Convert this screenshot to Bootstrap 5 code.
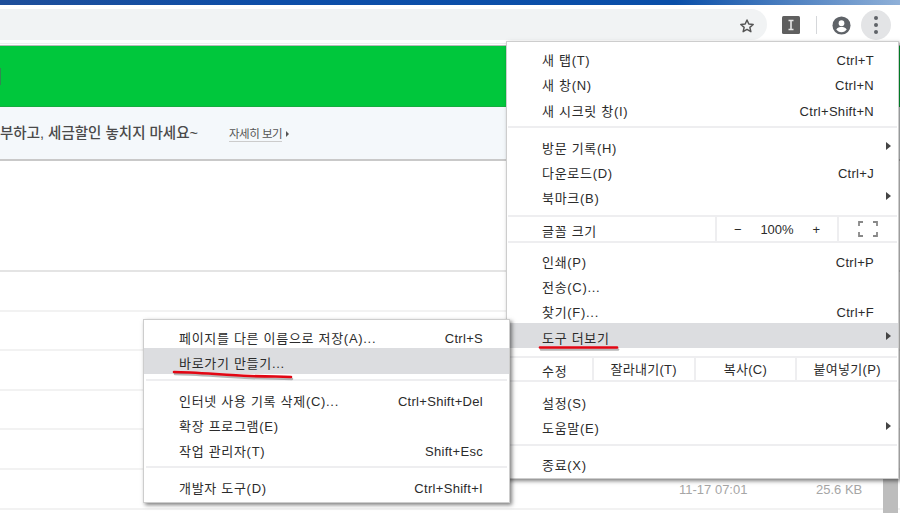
<!DOCTYPE html>
<html lang="ko"><head><meta charset="utf-8">
<link href="https://cdn.jsdelivr.net/npm/bootstrap@5.3.0/dist/css/bootstrap.min.css" rel="stylesheet">
<style>
html,body{margin:0;height:513px;overflow:hidden;background:#fff}
body{font-family:"Liberation Sans","Noto Sans CJK KR",sans-serif;font-size:13px;color:#333;position:relative;width:900px}
.titlebar{height:5px;background:linear-gradient(90deg,#1f4f9a 0,#0e4ea8 30%,#0a4fa8 75%,#8fb0d8 100%)}
.toolbar{height:39px;background:#fff;border-bottom:1px solid #efefef;padding-top:4px}
.omni{width:767px;height:31px;background:#f1f3f4;border-radius:0 16px 16px 0;padding-right:12px;flex:none}
.star-ic{flex:none;margin-top:2px}
.ic-ext{flex:none;margin:7px 0 0 15px}
.tool-sep{width:1px;height:18px;background:#d5d7da;margin:7px 15px 0 16px;flex:none}
.ic-user{flex:none;margin-top:7px}
.dots{width:30px;height:30px;border-radius:50%;background:#e3e4e6;margin:1px 9px 0 10px;flex:none}
.dot{width:4px;height:4px;background:#5f6368;margin:-.5px 0}
.banner-green{height:62px;margin-top:1px;background:#00c73c;border-top:1px solid #b9b9b9;border-bottom:1px solid #15ad3f}
.green-mark{width:1px;height:17px;background:#2f8a50}
.banner-tip{height:54px;background:#f4f8fb;border-bottom:2px solid #c9c9c9;padding-top:2px;font-size:14.5px;font-weight:500;color:#4a4a4a;white-space:nowrap}
.tip-more{font-size:11.5px;font-weight:400;color:#555;border-bottom:1px solid #ccc;margin-left:31px;line-height:14px;letter-spacing:-.5px}
.tip-arrow{width:0;height:0;border-left:3px solid #555;border-top:3px solid transparent;border-bottom:3px solid transparent;margin-left:4px}
.rows{padding-top:71px}
.data-row{height:39.6px;border-bottom:2px solid #f2f2f2}
.data-row.first{height:40px;border-bottom-color:#e4e4e4}
.cell-date,.cell-size{position:absolute;top:480px;color:#a6a6a6;font-size:13px}
.cell-date{left:679px}.cell-size{left:816px}
.scroll-thumb{position:absolute;left:883px;top:476px;width:15px;height:37px;background:#bdbdbd}
.cmenu{position:absolute;background:#fff;border:1px solid #cdcdcd;box-shadow:2px 2px 4px rgba(0,0,0,.5);color:#2b2b2b;font-size:13px;padding-top:3px}
.menu-main{left:506px;top:41px;width:393px;height:438px}
.menu-sub{left:143px;top:319px;width:367px;height:184px}
.mi{height:25.3px;padding:6px 26px 0 35px;display:flex;align-items:center;justify-content:space-between;white-space:nowrap;position:relative}
.menu-main .mi{padding-right:24px}
.mi>span:first-child,.mi-row{letter-spacing:.7px}
.mi>span+span{letter-spacing:.3px}
.mi.on{background:#dcdde0}
.msep{height:2px;background:#eeeef0;margin:5px 0}
.menu-main .msep{margin:5px 1px}
.menu-sub .msep{margin:5px 2px}
.caret-r{position:absolute;right:7px;top:9px;width:0;height:0;border-left:5px solid #444;border-top:4px solid transparent;border-bottom:4px solid transparent}
.mi-row{display:flex;align-items:stretch;white-space:nowrap;border-top:2px solid #eeeef0;border-bottom:2px solid #eeeef0;margin:0 1px}
.row-zoom{height:28px;margin-top:6px;margin-bottom:4px}
.row-edit{height:26px;margin-top:8px;margin-bottom:6px}
.mi-row .lab{padding:6px 0 0 34px;display:flex;align-items:center}
.zoom-lab{width:207px}
.zoom-box{width:122px;border-left:2px solid #eeeef0;display:flex;align-items:center;justify-content:space-between;padding:2px 17px 0;letter-spacing:0}
.zoom-full{flex:1;border-left:2px solid #eeeef0;display:flex;align-items:center;padding-left:19px}
.edit-lab{width:84px}
.edit-btn{width:102px;border-left:2px solid #eeeef0;display:flex;align-items:center;justify-content:center;padding-top:2px;letter-spacing:.3px}
.squiggle{position:absolute;left:0;top:0;pointer-events:none;overflow:visible}
</style></head><body>
<div class="titlebar"></div>
<div class="toolbar d-flex align-items-start">
  <div class="omni d-flex align-items-center justify-content-end">
    <svg class="star-ic" width="16" height="16" viewBox="0 0 24 24"><path d="M12 3l2.700 6.100 6.600.6-5 4.400 1.500 6.500L12 17.200l-5.800 3.400 1.500-6.500-5-4.400 6.600-.6z" fill="none" stroke="#555" stroke-width="2.200" stroke-linejoin="round"/></svg>
  </div>
  <svg class="ic-ext" width="18" height="18" viewBox="0 0 18 18"><rect width="18" height="18" rx="1.500" fill="#5f5f5f"/><path d="M6.500 4.500h5M6.500 13.500h5M9 4.500v9" stroke="#e6e6e6" stroke-width="1.600"/></svg>
  <div class="tool-sep"></div>
  <svg class="ic-user" width="19" height="19" viewBox="0 0 20 20"><circle cx="10" cy="10" r="9.500" fill="#5f6368"/><circle cx="10" cy="7.500" r="3" fill="#fff"/><path d="M4.500 14.200c1.200-2 3.500-2.900 5.500-2.900s4.300.9 5.500 2.900c-1.200 1.700-3.200 2.800-5.500 2.800s-4.300-1.100-5.500-2.800z" fill="#fff"/></svg>
  <div class="dots d-flex flex-column align-items-center justify-content-center gap-1">
    <span class="dot rounded-circle"></span><span class="dot rounded-circle"></span><span class="dot rounded-circle"></span>
  </div>
</div>
<div class="banner-green d-flex align-items-center"><span class="green-mark"></span></div>
<div class="banner-tip d-flex align-items-center"><span>부하고, 세금할인 놓치지 마세요~</span><span class="tip-more">자세히 보기</span><span class="tip-arrow"></span></div>
<div class="rows">
  <div class="data-row first"></div><div class="data-row"></div><div class="data-row"></div><div class="data-row"></div><div class="data-row"></div><div class="data-row"></div><div class="data-row"></div>
</div>
<div class="cell-date">11-17 07:01</div><div class="cell-size">25.6 KB</div>
<div class="scroll-thumb"></div>

<div class="cmenu menu-main">
  <div class="mi"><span>새 탭(T)</span><span>Ctrl+T</span></div>
  <div class="mi"><span>새 창(N)</span><span>Ctrl+N</span></div>
  <div class="mi"><span>새 시크릿 창(I)</span><span>Ctrl+Shift+N</span></div>
  <div class="msep"></div>
  <div class="mi"><span>방문 기록(H)</span><i class="caret-r"></i></div>
  <div class="mi"><span>다운로드(D)</span><span>Ctrl+J</span></div>
  <div class="mi"><span>북마크(B)</span><i class="caret-r"></i></div>
  <div class="mi-row row-zoom">
    <div class="lab zoom-lab">글꼴 크기</div>
    <div class="zoom-box"><span>−</span><span>100%</span><span>+</span></div>
    <div class="zoom-full"><svg width="20" height="16" viewBox="0 0 20 16"><path d="M1 5V1h4M15 1h4v4M1 11v4h4M15 15h4v-4" fill="none" stroke="#888" stroke-width="1.800"/></svg></div>
  </div>
  <div class="mi"><span>인쇄(P)</span><span>Ctrl+P</span></div>
  <div class="mi"><span>전송(C)...</span></div>
  <div class="mi"><span>찾기(F)...</span><span>Ctrl+F</span></div>
  <div class="mi on"><span>도구 더보기</span><i class="caret-r"></i></div>
  <div class="mi-row row-edit">
    <div class="lab edit-lab">수정</div>
    <div class="edit-btn">잘라내기(T)</div><div class="edit-btn">복사(C)</div><div class="edit-btn">붙여넣기(P)</div>
  </div>
  <div class="mi"><span>설정(S)</span></div>
  <div class="mi"><span>도움말(E)</span><i class="caret-r"></i></div>
  <div class="msep"></div>
  <div class="mi"><span>종료(X)</span></div>
</div>

<div class="cmenu menu-sub">
  <div class="mi"><span>페이지를 다른 이름으로 저장(A)...</span><span>Ctrl+S</span></div>
  <div class="mi on"><span>바로가기 만들기...</span></div>
  <div class="msep"></div>
  <div class="mi"><span>인터넷 사용 기록 삭제(C)...</span><span>Ctrl+Shift+Del</span></div>
  <div class="mi"><span>확장 프로그램(E)</span></div>
  <div class="mi"><span>작업 관리자(T)</span><span>Shift+Esc</span></div>
  <div class="msep"></div>
  <div class="mi"><span>개발자 도구(D)</span><span>Ctrl+Shift+I</span></div>
</div>

<svg class="squiggle" width="900" height="513" viewBox="0 0 900 513">
  <path d="M174 372c20 0 50 3 76 4s28 0 41 1" fill="none" stroke="#333" stroke-width="2.500" opacity=".35" stroke-linecap="round" transform="translate(1 2)"/>
  <path d="M174 372c20 0 50 3 76 4s28 0 41 1" fill="none" stroke="#e30613" stroke-width="2.600" stroke-linecap="round"/>
  <path d="M540 347.500h77" fill="none" stroke="#333" stroke-width="2.500" opacity=".35" stroke-linecap="round" transform="translate(1 2)"/>
  <path d="M540 347.500h77" fill="none" stroke="#e30613" stroke-width="2.600" stroke-linecap="round"/>
</svg>
</body></html>
